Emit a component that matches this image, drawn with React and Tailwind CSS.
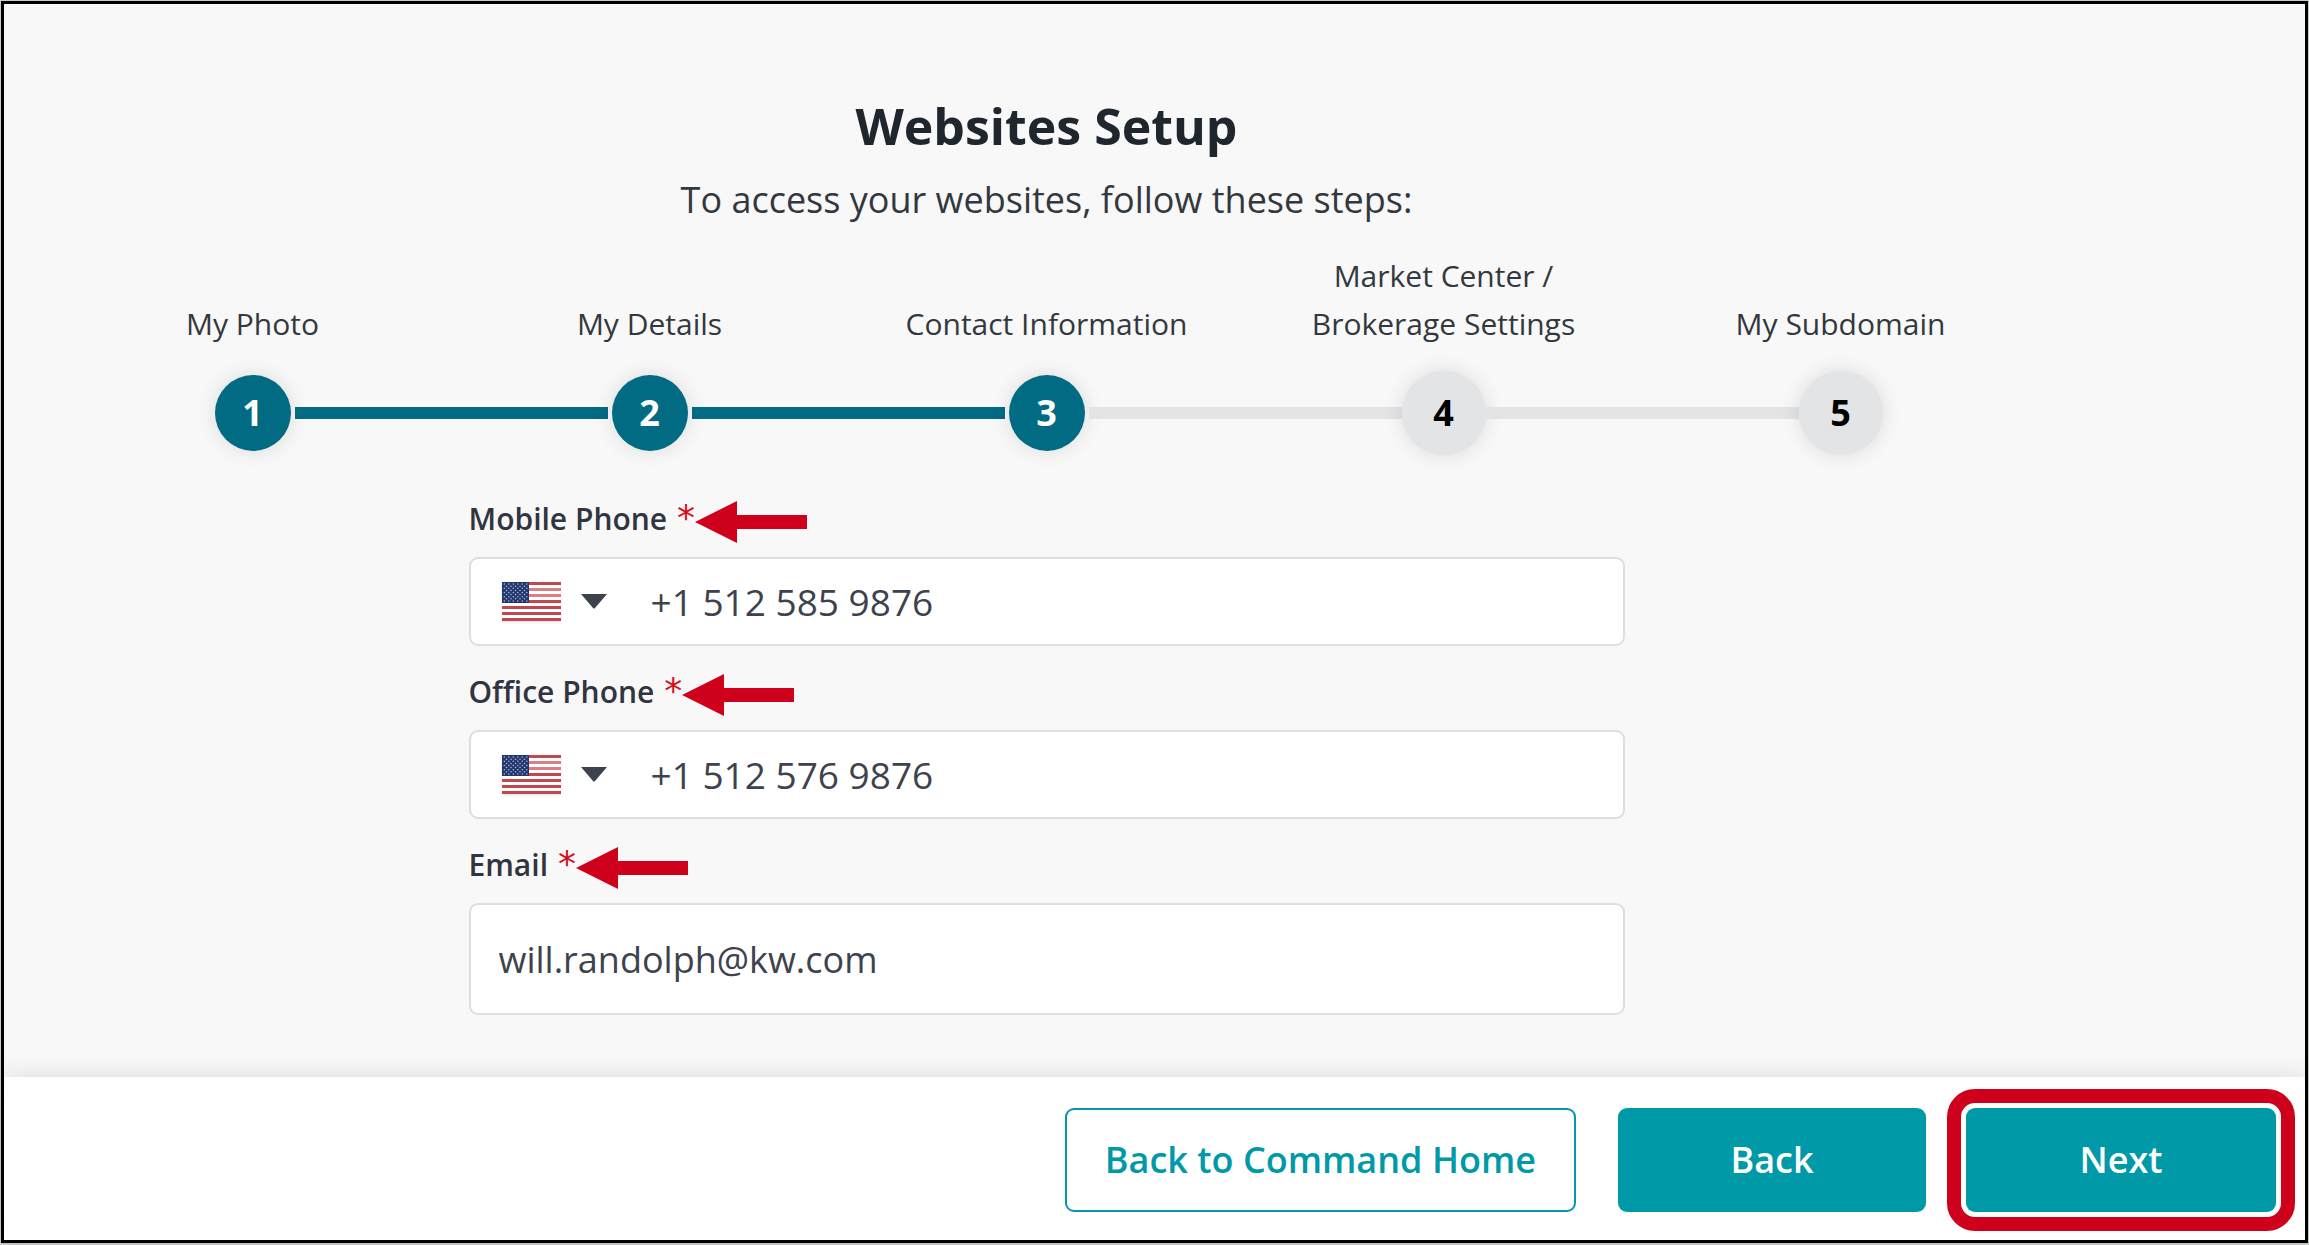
import { useState } from 'react'
import clsx from 'clsx'

const steps = ['My Photo', 'My Details', 'Contact Information', 'Market Center / Brokerage Settings', 'My Subdomain']
const current = 2

const stripes = [0, 2, 4, 6, 8, 10, 12]
const starRows = [0, 1, 2, 3, 4, 5, 6, 7, 8]

function UsFlag() {
  return (
    <svg width="59" height="39" viewBox="0 0 59 39" className="shadow-sm" aria-hidden="true">
      <rect width="59" height="39" fill="#fff" />
      {stripes.map(n => (
        <rect key={n} y={n * 3} width="59" height="3" fill={n === 2 || n === 4 ? '#d98086' : '#c3474e'} />
      ))}
      <rect width="27" height="21" fill="#22376f" />
      {starRows.map(r =>
        (r % 2 ? [0, 1, 2, 3, 4] : [0, 1, 2, 3, 4, 5]).map(c => (
          <circle
            key={r + '-' + c}
            cx={(r % 2 ? 4.5 : 2.3) + c * 4.5}
            cy={2.1 + r * 2.1}
            r="0.75"
            fill="#b4bfd6"
          />
        ))
      )}
    </svg>
  )
}

function Arrow() {
  return (
    <svg width="112" height="42" viewBox="0 0 112 42" className="shrink-0" aria-hidden="true">
      <path d="M0 21 42 0V14H112V28H42V42Z" fill="#cf001c" />
    </svg>
  )
}

function FieldHeader({ id, children }) {
  return (
    <div className="flex h-[84px] items-end pb-3.5">
      <label htmlFor={id} className="flex items-baseline gap-2.5 text-[30px] leading-[48px] font-semibold text-[#303541]">
        {children}
        <span className="font-['DejaVu_Sans',sans-serif] text-[36px] leading-none font-normal text-[#d4111f]">*</span>
      </label>
      <Arrow />
    </div>
  )
}

function PhoneField({ id, label, value, onChange }) {
  return (
    <div>
      <FieldHeader id={id}>{label}</FieldHeader>
      <div className="flex h-[89px] items-center rounded-[9px] border-2 border-[#dcdee0] bg-white pl-[31px]">
        <div className="relative flex items-center gap-5">
          <UsFlag />
          <svg width="26" height="15" viewBox="0 0 26 15" aria-hidden="true">
            <path d="M0 0H26L14 14Q13 15 12 14Z" fill="#3d424e" />
          </svg>
          <select aria-label={label + ' country'} className="absolute inset-0 cursor-pointer opacity-0">
            <option></option>
          </select>
        </div>
        <input
          id={id}
          type="tel"
          value={value}
          onChange={e => onChange(e.target.value)}
          className="h-full min-w-0 flex-1 pl-11 text-[37px] text-[#3d424e] outline-none"
        />
      </div>
    </div>
  )
}

export default function App() {
  const [mobile, setMobile] = useState('+1 512 585 9876')
  const [office, setOffice] = useState('+1 512 576 9876')
  const [email, setEmail] = useState('will.randolph@kw.com')

  return (
    <div className="flex min-h-screen bg-[#c9cdca] p-px pb-0.5 font-['Open_Sans',sans-serif]">
      <div className="flex flex-1 flex-col border-3 border-black bg-[#f8f8f8]">

        <main className="flex-1 pt-[86px] pr-[266px] pb-14 pl-[50px]">
          <h1 className="text-center text-[50px] leading-[72px] font-bold text-[#20262d]">Websites Setup</h1>
          <p className="mt-3.5 text-center text-[36px] leading-[48px] text-[#33383f]">
            To access your websites, follow these steps:
          </p>

          <ol className="mt-7 grid grid-cols-5">
            {steps.map((name, i) => (
              <li key={name} className="flex flex-col items-center">
                <div className="flex h-24 items-end">
                  <span className="max-w-[290px] text-center text-[30px] leading-[48px] text-[#33383f]">{name}</span>
                </div>
                <div className="mt-[23px] flex w-full items-center">
                  <div className={clsx('h-3 flex-1', i > 0 && (i <= current ? 'bg-[#006b82]' : 'bg-[#e3e4e6]'))} />
                  <div
                    className={clsx(
                      'flex items-center justify-center rounded-full text-[36px] font-bold shadow-[0_0_20px_rgba(0,0,0,0.12)]',
                      i <= current ? 'm-1 size-[76px] bg-[#006b82] text-white' : 'size-[84px] bg-[#e3e4e6] text-black'
                    )}
                  >
                    {i + 1}
                  </div>
                  <div
                    className={clsx('h-3 flex-1', i < steps.length - 1 && (i < current ? 'bg-[#006b82]' : 'bg-[#e3e4e6]'))}
                  />
                </div>
              </li>
            ))}
          </ol>

          <form className="mx-auto mt-[18px] max-w-[1156px]">
            <PhoneField id="mobile" label="Mobile Phone" value={mobile} onChange={setMobile} />
            <PhoneField id="office" label="Office Phone" value={office} onChange={setOffice} />
            <FieldHeader id="email">Email</FieldHeader>
            <input
              id="email"
              type="email"
              value={email}
              onChange={e => setEmail(e.target.value)}
              className="h-[112px] w-full rounded-[9px] border-2 border-[#dcdee0] bg-white px-7 text-[36px] text-[#3d424e] outline-none"
            />
          </form>
        </main>

        <footer className="flex items-center justify-end bg-white pt-3 pr-2.5 pb-[9px] text-[36px] font-semibold shadow-[0_0_24px_rgba(0,0,0,0.12)]">
          <button className="h-[104px] rounded-[9px] border-2 border-[#0099a8] px-[38px] text-[#0099a8]">
            Back to Command Home
          </button>
          <button className="ml-[42px] h-[104px] w-[308px] rounded-[9px] bg-[#0099a8] text-white">Back</button>
          <div className="ml-[21px] rounded-[28px] border-14 border-[#cf001c] p-[5px]">
            <button className="block h-[104px] w-[310px] rounded-[9px] bg-[#0099a8] text-white">Next</button>
          </div>
        </footer>

      </div>
    </div>
  )
}
